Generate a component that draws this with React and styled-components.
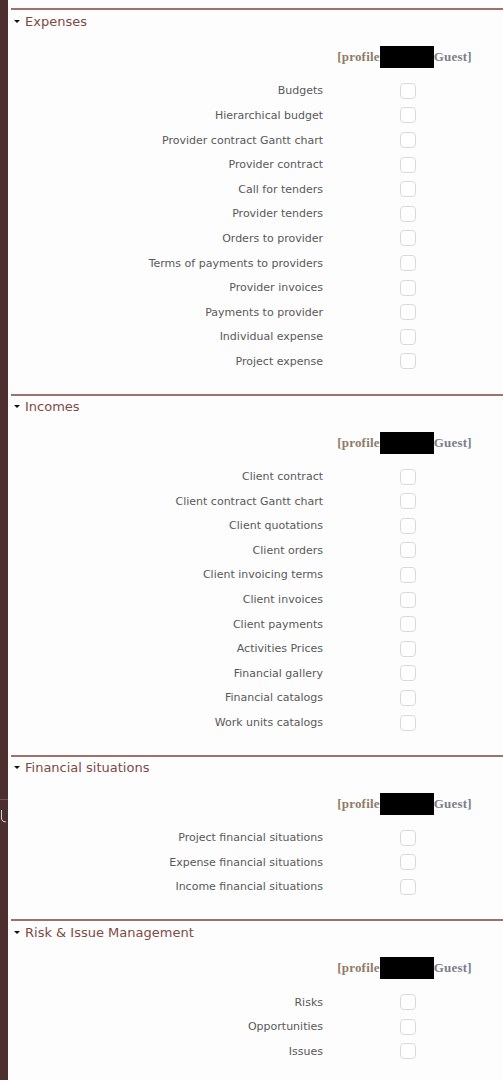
import React from "react";
import styled, { createGlobalStyle } from "styled-components";

const Global = createGlobalStyle`
  html, body { margin: 0; padding: 0; background: #fdfdfd; }
  body { font-family: "DejaVu Sans", Verdana, sans-serif; }
`;

const Page = styled.div`
  display: flex;
  min-height: 1080px;
  background: #fdfdfd;
`;

const Sidebar = styled.div`
  position: relative;
  flex: 0 0 8px;
  background: #4e2f30;
`;

const SideMark = styled.svg`
  position: absolute;
  left: 0;
  top: 796px;
`;

const Content = styled.div`
  flex: 1;
  margin-left: 3px;
  padding-top: 8px;
`;

const Section = styled.section`
  border-top: 2px solid #a0716c;
  padding-bottom: 20px;
`;

const Title = styled.div`
  display: flex;
  align-items: center;
  height: 20px;
  padding-top: 1px;
  padding-left: 3px;
  gap: 5px;
  font-size: 13px;
  color: #7d4a45;
`;

const Caret = styled.span`
  width: 0;
  height: 0;
  border-left: 3px solid transparent;
  border-right: 3px solid transparent;
  border-top: 3.5px solid #111;
`;

const Grid = styled.div`
  display: grid;
  grid-template-columns: 312px 169px;
  margin-top: 15px;
`;

const HeaderCell = styled.div`
  grid-column: 2;
  height: 22px;
  display: flex;
  align-items: center;
  justify-content: center;
  margin-bottom: 10.6px;
  font-family: "Liberation Serif", "Times New Roman", serif;
  font-weight: bold;
  font-size: 13px;
  letter-spacing: 0.2px;
  margin-left: -6px;
`;

const ProfileText = styled.span`
  color: ${(p) => p.$tone};
`;

const Redact = styled.span`
  display: inline-block;
  width: 54px;
  height: 22px;
  background: #000;
`;

const Label = styled.div`
  grid-column: 1;
  height: 24.6px;
  display: flex;
  align-items: center;
  justify-content: flex-end;
  font-size: 11px;
  color: #595959;
  white-space: nowrap;
`;

const BoxCell = styled.div`
  grid-column: 2;
  height: 24.6px;
  display: flex;
  align-items: center;
  justify-content: center;
`;

const Check = styled.span`
  display: block;
  width: 14px;
  height: 14px;
  border: 1px solid #d9d9d9;
  border-radius: 4px;
  background: #fff;
`;

const sections = [
  {
    title: "Expenses",
    items: [
      "Budgets",
      "Hierarchical budget",
      "Provider contract Gantt chart",
      "Provider contract",
      "Call for tenders",
      "Provider tenders",
      "Orders to provider",
      "Terms of payments to providers",
      "Provider invoices",
      "Payments to provider",
      "Individual expense",
      "Project expense",
    ],
  },
  {
    title: "Incomes",
    items: [
      "Client contract",
      "Client contract Gantt chart",
      "Client quotations",
      "Client orders",
      "Client invoicing terms",
      "Client invoices",
      "Client payments",
      "Activities Prices",
      "Financial gallery",
      "Financial catalogs",
      "Work units catalogs",
    ],
  },
  {
    title: "Financial situations",
    items: [
      "Project financial situations",
      "Expense financial situations",
      "Income financial situations",
    ],
  },
  {
    title: "Risk & Issue Management",
    items: ["Risks", "Opportunities", "Issues"],
  },
];

export default function App() {
  return (
    <>
      <Global />
      <Page>
        <Sidebar>
          <SideMark width="8" height="30" viewBox="0 0 8 30">
            <line x1="0" y1="3.5" x2="8" y2="3.5" stroke="#6e5455" strokeWidth="1" />
            <path d="M1.5 14 L1.5 23 Q2 26 6 26" fill="none" stroke="#d8d0d0" strokeWidth="1" />
          </SideMark>
        </Sidebar>
        <Content>
          {sections.map((s) => (
            <Section key={s.title}>
              <Title>
                <Caret />
                {s.title}
              </Title>
              <Grid>
                <HeaderCell>
                  <ProfileText $tone="#8f7c68">[profile</ProfileText>
                  <Redact />
                  <ProfileText $tone="#7a7f88">Guest]</ProfileText>
                </HeaderCell>
                {s.items.map((it) => (
                  <React.Fragment key={it}>
                    <Label>{it}</Label>
                    <BoxCell>
                      <Check />
                    </BoxCell>
                  </React.Fragment>
                ))}
              </Grid>
            </Section>
          ))}
        </Content>
      </Page>
    </>
  );
}
